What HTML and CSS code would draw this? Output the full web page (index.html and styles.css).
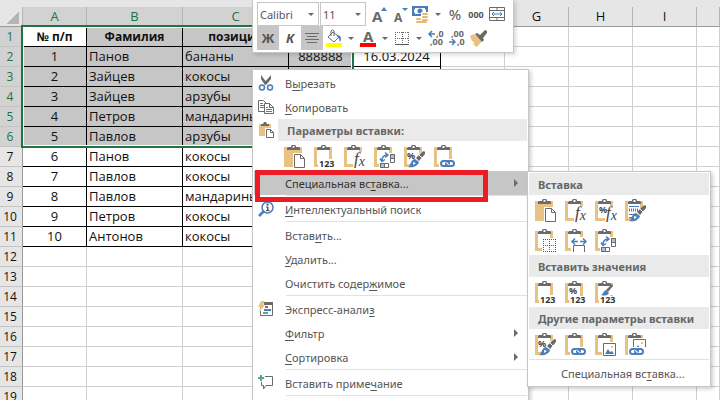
FILE: index.html
```html
<!DOCTYPE html>
<html lang="ru">
<head>
  <meta charset="UTF-8" />
  <meta name="viewport" content="width=device-width, initial-scale=1.0"/>
  <title>Специальная вставка</title>
  <link rel="stylesheet" href="styles.css">
</head>
<body>
  <!-- shared icon shapes -->
  <svg class="sprite" aria-hidden="true">
    <symbol id="clip" viewBox="0 0 24 24">
      <path fill="#6a6a6a" fill-rule="evenodd" d="M4 6V4l1-1h3V2l1-1h3l1 1v1h3l1 1v2zM9.500 2v2h2V2z"/>
    </symbol>
    <symbol id="board" viewBox="0 0 24 24">
      <path fill="#e8c282" d="M1 3h18v20H1z"/>
      <path fill="#fff" d="M4 3h12v17H4z"/>
      <use href="#clip"/>
    </symbol>
    <symbol id="link" viewBox="0 0 24 24">
      <path fill="#fff" d="M6 15h18v9H6z"/>
      <g fill="none" stroke="#4a7ebb" stroke-width="2">
        <rect x="8" y="17" width="8" height="5" rx="2.500"/>
        <rect x="13" y="17" width="8" height="5" rx="2.500"/>
      </g>
      <path stroke="#fff" d="M12.500 18l4 3"/>
    </symbol>
    <symbol id="brush" viewBox="0 0 24 24">
      <path fill="#6a6a6a" d="M21 7l1 1v2l-6 7-3-3 6-6z"/>
      <path fill="none" stroke="#fff" d="M16 11l3 3"/>
      <path fill="#4a7ebb" d="M12 15l4 3c-1 4-6 6-11 5 3-1 2-7 7-8z"/>
      <path fill="#fff" d="M10 18l3 1-3 2z"/>
    </symbol>
    <symbol id="paste" viewBox="0 0 24 24">
      <path fill="#e8c282" d="M1 3h18v20H1z"/>
      <use href="#clip"/>
      <path fill="#fff" d="M10 9h13v15H10z"/>
      <path fill="#fff" stroke="#6a6a6a" d="M11.500 10.500h6l4 4v9h-10zM17.500 10.500v4h4"/>
    </symbol>
    <symbol id="values" viewBox="0 0 24 24">
      <use href="#board"/>
      <path fill="#fff" d="M5 15h19v9H5z"/>
      <text class="t-num" x="6" y="23">123</text>
    </symbol>
    <symbol id="formulas" viewBox="0 0 24 24">
      <use href="#board"/>
      <path fill="#fff" d="M10 8h14v16H10z"/>
      <text class="t-fx" x="11" y="20">f<tspan dy="2" font-size="14">x</tspan></text>
    </symbol>
    <symbol id="formulas-num" viewBox="0 0 24 24">
      <use href="#board"/>
      <path fill="#fff" d="M11 8h13v16H11z"/>
      <text class="t-pct" x="5" y="15">%</text>
      <text class="t-fx" x="12" y="20">f<tspan dy="2" font-size="14">x</tspan></text>
    </symbol>
    <symbol id="transpose" viewBox="0 0 24 24">
      <use href="#board"/>
      <path fill="#fff" d="M6 9h18v15H6z"/>
      <g stroke="#6a6a6a">
        <path fill="#fff" d="M7.500 19.500h8v4h-8zM17.500 10.500h4v8h-4z"/>
        <path fill="#a7c2e0" d="M7.500 19.500h4v4h-4zM17.500 10.500h4v4h-4z"/>
      </g>
      <path fill="none" stroke="#4a7ebb" stroke-width="1.500" d="M9 17c0-4 2-6 5-6M7 14.500l2 3 3-2M12 8.500l3 2.500-3 2.500"/>
    </symbol>
    <symbol id="format" viewBox="0 0 24 24">
      <use href="#board"/>
      <path fill="#fff" d="M14 11l7-5h3v18H9z"/>
      <text class="t-pct" x="4" y="15">%</text>
      <use href="#brush"/>
    </symbol>
    <symbol id="paste-link" viewBox="0 0 24 24">
      <use href="#board"/>
      <use href="#link"/>
    </symbol>
    <symbol id="source" viewBox="0 0 24 24">
      <use href="#board"/>
      <path stroke="#4a7ebb" d="M5 8.500h10M5 16.500h8M5 19.500h4"/>
      <path fill="none" stroke="#d9502e" stroke-dasharray="1 1" stroke-width="3" d="M5 12h9"/>
      <path fill="#fff" d="M16 11l5-4h3v17H12z"/>
      <use href="#brush"/>
    </symbol>
    <symbol id="no-borders" viewBox="0 0 24 24">
      <use href="#board"/>
      <path fill="#fff" d="M8 10h16v14H8z"/>
      <path fill="none" stroke="#555" stroke-dasharray="1 1" d="M9 11.500h13M9 17.500h13M9 23.500h13M9.500 11v13M15.500 11v13M21.500 11v13"/>
    </symbol>
    <symbol id="col-width" viewBox="0 0 24 24">
      <use href="#board"/>
      <path fill="#fff" d="M7 9h17v15H7z"/>
      <path fill="none" stroke="#6a6a6a" d="M9.500 24v-6.500h11V24"/>
      <path fill="none" stroke="#4a7ebb" stroke-width="1.500" d="M8 13.500h6M16 13.500h6M11 10.500l-3 3 3 3M19 10.500l3 3-3 3"/>
    </symbol>
    <symbol id="values-num" viewBox="0 0 24 24">
      <use href="#board"/>
      <path fill="#fff" d="M5 16h19v8H5z"/>
      <text class="t-pct" x="5" y="14">%</text>
      <text class="t-num" x="6" y="23">123</text>
    </symbol>
    <symbol id="values-fmt" viewBox="0 0 24 24">
      <use href="#board"/>
      <path fill="#fff" d="M5 16h19v8H5zM15 7h5v8h-5z"/>
      <path fill="#6a6a6a" d="M18 4l1 2-5 6-2-2z"/>
      <path fill="#4a7ebb" d="M12 10l3 3c-2 3-5 3-8 2 2 0 2-4 5-5z"/>
      <text class="t-num" x="6" y="23">123</text>
    </symbol>
    <symbol id="pic" viewBox="0 0 24 24">
      <path fill="#fff" stroke="#6a6a6a" d="M9.500 11.500h12v12h-12z"/>
      <path fill="#4a7ebb" d="M11 22l3-5 2 3 2-1 2 3z"/>
      <path fill="#e8c282" d="M17 14h2v2h-2z"/>
    </symbol>
    <symbol id="picture" viewBox="0 0 24 24">
      <use href="#board"/>
      <path fill="#fff" d="M8 10h16v14H8z"/>
      <use href="#pic"/>
    </symbol>
    <symbol id="picture-link" viewBox="0 0 24 24">
      <use href="#board"/>
      <path fill="#fff" d="M8 6h16v18H5v-8h3z"/>
      <use href="#pic" y="-4"/>
      <use href="#link" x="-2"/>
    </symbol>
  </svg>

  <main class="sheet">
    <table class="grid">
      <colgroup>
        <col class="w-head"><col class="w-std"><col class="w-b"><col class="w-c"><col class="w-std">
        <col class="w-e"><col class="w-std"><col class="w-std"><col class="w-std"><col class="w-std"><col>
      </colgroup>
      <thead>
        <tr>
          <th class="corner"></th>
          <th class="on">A</th><th class="on">B</th><th class="on">C</th><th class="on">D</th>
          <th>E</th><th>F</th><th>G</th><th>H</th><th>I</th><th></th>
        </tr>
      </thead>
      <tbody id="rows"></tbody>
    </table>
    <div class="selection"></div>
  </main>

  <div class="toolbar">
    <div class="tool-row">
      <span class="combo combo-font">
        <select aria-label="Шрифт"><option>Calibri</option></select>
      </span>
      <span class="combo combo-size">
        <select aria-label="Размер"><option>11</option></select>
      </span>
      <button class="tool" aria-label="Увеличить"><svg viewBox="0 0 20 20"><text class="t-a" x="3" y="18">A</text><path fill="#4a7ebb" d="M12 7l3-4 3 4z"/></svg></button>
      <button class="tool" aria-label="Уменьшить"><svg viewBox="0 0 20 20"><text class="t-a small" x="4" y="18">A</text><path fill="#4a7ebb" d="M12 4h6l-3 3z"/></svg></button>
      <button class="tool" aria-label="Денежный формат"><svg viewBox="0 0 20 20">
        <path fill="#4a7ebb" fill-rule="evenodd" d="M1 2h16v10H1zM4 4v1L3 6v2l1 1v1h10V9l1-1V6l-1-1V4z"/>
        <circle cx="9" cy="7" r="2.500" fill="#4a7ebb"/>
        <path fill="#fff" d="M10 8h9v11H4v-6h6z"/>
        <path stroke="#e8b872" stroke-width="2" stroke-linecap="round" d="M12 10h4M12 13h4M12 16h4M6 15h3M6 18h9"/>
      </svg></button>
      <button class="drop" aria-label="Ещё форматы"></button>
      <button class="tool pct">%</button>
      <button class="tool zeros">000</button>
      <button class="tool" aria-label="Объединить"><svg viewBox="0 0 20 20">
        <path fill="none" stroke="#6a6a6a" d="M2.500 3.500h15v13h-15zM2 6.500h16M2 13.500h16M10 3v3M10 14v3"/>
        <path fill="none" stroke="#4a7ebb" d="M5 10h10M7 8l-2 2 2 2M13 8l2 2-2 2"/>
      </svg></button>
    </div>
    <div class="tool-row">
      <button class="tool letter on">Ж</button>
      <button class="tool letter"><i>К</i></button>
      <button class="tool on" aria-label="По центру"><svg viewBox="0 0 20 20"><path stroke="#6a6a6a" d="M3 5.500h14M5 8.500h10M3 11.500h14M5 14.500h10"/></svg></button>
      <button class="tool" aria-label="Заливка"><svg viewBox="0 0 20 20">
        <path fill="#fff" stroke="#6a6a6a" d="M4 9l5-5 6 5-5 5z"/>
        <path fill="none" stroke="#6a6a6a" d="M7 8V3q1.500-2 3 0v5"/>
        <path fill="#4a7ebb" d="M14 7c3 1 4 4 2 7-1-2 0-4-3-5z"/>
        <path fill="#ff0" d="M2 15h16v4H2z"/>
      </svg></button>
      <button class="drop" aria-label="Цвет заливки"></button>
      <button class="tool" aria-label="Цвет текста"><svg viewBox="0 0 20 20"><text class="t-a" x="5" y="14">A</text><path fill="#f00" d="M2 15h16v4H2z"/></svg></button>
      <button class="drop" aria-label="Выбор цвета текста"></button>
      <button class="tool" aria-label="Границы"><svg viewBox="0 0 20 20">
        <path fill="none" stroke="#6a6a6a" stroke-dasharray="1 1" d="M3 4.500h14M3 10.500h14M3.500 4v12M10.500 4v12M16.500 4v12"/>
        <path stroke="#555" d="M3 16.500h14"/>
      </svg></button>
      <button class="drop" aria-label="Выбор границ"></button>
      <button class="tool" aria-label="Увеличить разрядность"><svg viewBox="0 0 20 20">
        <path fill="none" stroke="#4a7ebb" stroke-width="1.500" d="M3 6h6M6 3L3 6l3 3"/>
        <text class="t-dec" x="10" y="9">,0</text><text class="t-dec" x="4" y="17">,00</text>
      </svg></button>
      <button class="tool" aria-label="Уменьшить разрядность"><svg viewBox="0 0 20 20">
        <text class="t-dec" x="4" y="9">,00</text><text class="t-dec" x="10" y="17">,0</text>
        <path fill="none" stroke="#4a7ebb" stroke-width="1.500" d="M2 14h6M5 11l3 3-3 3"/>
      </svg></button>
      <button class="tool" aria-label="Формат по образцу"><svg viewBox="0 0 20 20">
        <path fill="#e8c282" d="M2 8l4-2 8 7-5 6c-2-1-3-2-4-4l2 0-3-2z"/>
        <path fill="#6a6a6a" d="M7 6l2-1 3 2 5-5 2 1v2l-4 5 1 2-2 2z"/>
      </svg></button>
    </div>
  </div>

  <nav class="menu context-menu">
    <button class="item"><svg viewBox="0 0 16 16">
      <path fill="#6a6a6a" d="M3 0l6 8-2 2L3 4zM13 0v4L8 10 6 8z"/>
      <g fill="none" stroke="#4a7ebb" stroke-width="1.500"><circle cx="4" cy="12.500" r="2.500"/><circle cx="12" cy="12.500" r="2.500"/></g>
    </svg><span>В<u>ы</u>резать</span></button>
    <button class="item"><svg viewBox="0 0 16 16">
      <path fill="#fff" stroke="#6a6a6a" d="M.5 1.500h5l3 3v8h-8z"/>
      <path stroke="#4a7ebb" d="M2 4.500h3M2 6.500h4M2 8.500h4"/>
      <path fill="#fff" stroke="#6a6a6a" d="M6.500 4.500h5l4 4v6h-9zM11.500 4.500v4h4"/>
      <path stroke="#4a7ebb" d="M8 8.500h2M8 10.500h6M8 12.500h6"/>
    </svg><span><u>К</u>опировать</span></button>
    <div class="caption"><svg viewBox="0 0 16 16">
      <path fill="#e8c282" d="M1 2h12v12H1z"/>
      <path fill="#6a6a6a" d="M3 4V2h2l1-2h2l1 2h2v2z"/>
      <path fill="#fff" d="M7 6h9v10H7z"/>
      <path fill="#fff" stroke="#6a6a6a" d="M8.500 7.500h4l3 3v5h-7zM12.500 7.500v3h3"/>
    </svg><strong>Параметры вставки:</strong></div>
    <div class="icons">
      <button aria-label="Вставить"><svg><use href="#paste"/></svg></button>
      <button aria-label="Значения"><svg><use href="#values"/></svg></button>
      <button aria-label="Формулы"><svg><use href="#formulas"/></svg></button>
      <button aria-label="Транспонировать"><svg><use href="#transpose"/></svg></button>
      <button aria-label="Форматирование"><svg><use href="#format"/></svg></button>
      <button aria-label="Вставить связь"><svg><use href="#paste-link"/></svg></button>
    </div>
    <button class="item more active"><span>Специальная вс<u>т</u>авка...</span></button>
    <hr>
    <button class="item"><svg viewBox="0 0 16 16">
      <circle cx="9.500" cy="6.500" r="5.500" fill="#fff" stroke="#4a7ebb" stroke-width="1.500"/>
      <path stroke="#4a7ebb" stroke-width="2.500" d="M5.500 10.500L1 15"/>
      <path fill="#555" d="M8.500 2.500h2v2h-2zM8 5.500h2.500V9h1v1H8V9h1V6.500H8z"/>
    </svg><span><u>И</u>нтеллектуальный поиск</span></button>
    <hr>
    <button class="item"><span>Встав<u>и</u>ть...</span></button>
    <button class="item"><span><u>У</u>далить...</span></button>
    <button class="item"><span>Очистить содер<u>ж</u>имое</span></button>
    <hr>
    <button class="item"><svg viewBox="0 0 16 16">
      <path fill="#fff" stroke="#6a6a6a" d="M2.500 1.500h12v13h-12z"/>
      <path fill="#6a6a6a" d="M6 1h9v3H6z"/>
      <path fill="#fff" d="M0 0h6v10H0z"/>
      <path fill="#e8c282" d="M3 0h4L5 4h2l-6 7 1-5H0z"/>
      <path stroke="#d9502e" stroke-width="2" d="M7 6h3"/>
      <path stroke="#4a7ebb" stroke-width="2" d="M6 9h7"/>
      <path stroke="#5fa38c" stroke-width="2" d="M5 12h5"/>
    </svg><span>Экспресс-анали<u>з</u></span></button>
    <button class="item more"><span><u>Ф</u>ильтр</span></button>
    <button class="item more"><span><u>С</u>ортировка</span></button>
    <hr>
    <button class="item"><svg viewBox="0 0 16 16">
      <path fill="none" stroke="#6a6a6a" d="M7 1.500h7.500v9H8L5.500 14v-3.500h-2V7"/>
      <path stroke="#5fa38c" stroke-width="2" d="M0 3h6M3 0v6"/>
    </svg><span>Вставить приме<u>ч</u>ание</span></button>
    <hr>
  </nav>

  <div class="mark"></div>

  <nav class="menu submenu">
    <div class="caption"><strong>Вставка</strong></div>
    <div class="icons">
      <button aria-label="Вставить"><svg><use href="#paste"/></svg></button>
      <button aria-label="Формулы"><svg><use href="#formulas"/></svg></button>
      <button aria-label="Формулы и форматы чисел"><svg><use href="#formulas-num"/></svg></button>
      <button aria-label="Сохранить исходное форматирование"><svg><use href="#source"/></svg></button>
      <button aria-label="Без рамок"><svg><use href="#no-borders"/></svg></button>
      <button aria-label="Сохранить ширины столбцов"><svg><use href="#col-width"/></svg></button>
      <button aria-label="Транспонировать"><svg><use href="#transpose"/></svg></button>
    </div>
    <div class="caption"><strong>Вставить значения</strong></div>
    <div class="icons">
      <button aria-label="Значения"><svg><use href="#values"/></svg></button>
      <button aria-label="Значения и форматы чисел"><svg><use href="#values-num"/></svg></button>
      <button aria-label="Значения и исходное форматирование"><svg><use href="#values-fmt"/></svg></button>
    </div>
    <div class="caption"><strong>Другие параметры вставки</strong></div>
    <div class="icons">
      <button aria-label="Форматирование"><svg><use href="#format"/></svg></button>
      <button aria-label="Вставить связь"><svg><use href="#paste-link"/></svg></button>
      <button aria-label="Рисунок"><svg><use href="#picture"/></svg></button>
      <button aria-label="Связанный рисунок"><svg><use href="#picture-link"/></svg></button>
    </div>
    <hr>
    <button class="item"><span>Специальная вс<u>т</u>авка...</span></button>
  </nav>

  <script>
    const data = [
      ["№ п/п", "Фамилия", "позиция", "", ""],
      ["1", "Панов", "бананы", "888888", "16.03.2024"],
      ["2", "Зайцев", "кокосы", "", ""],
      ["3", "Зайцев", "арзубы", "", ""],
      ["4", "Петров", "мандарины", "", ""],
      ["5", "Павлов", "арзубы", "", ""],
      ["6", "Панов", "кокосы", "", ""],
      ["7", "Павлов", "кокосы", "", ""],
      ["8", "Павлов", "мандарины", "", ""],
      ["9", "Петров", "кокосы", "", ""],
      ["10", "Антонов", "кокосы", "", ""],
    ];
    const rowCount = 19;
    const colCount = 10;
    const selectedRows = 6;
    const selectedCols = 4;

    const body = document.getElementById("rows");

    for (let r = 0; r < rowCount; r++) {
      const tr = document.createElement("tr");
      const head = document.createElement("th");
      head.textContent = r + 1;
      if (r < selectedRows) head.classList.add("on");
      tr.appendChild(head);

      for (let c = 0; c < colCount; c++) {
        const td = document.createElement("td");
        if (data[r] && c < data[r].length) {
          td.textContent = data[r][c];
          td.classList.add("filled");
          if (r === 0) td.classList.add("title");
          if (c === 0 || c > 2) td.classList.add("center");
        }
        if (r < selectedRows && c < selectedCols && r + c > 0) td.classList.add("selected");
        tr.appendChild(td);
      }
      body.appendChild(tr);
    }
  </script>
</body>
</html>
```
FILE: styles.css
```css
* {
  box-sizing: border-box;
}

body {
  margin: 0;
  height: 100vh;
  overflow: hidden;
  position: relative;
  background: #fff;
  font-family: "Noto Sans", "Open Sans", sans-serif;
  font-size: 11px;
  color: #555;
}

button,
select {
  font: inherit;
  color: inherit;
  border: 0;
  margin: 0;
  padding: 0;
  background: none;
}

.sprite {
  display: none;
}

/* sheet */
.sheet {
  position: relative;
  height: 100%;
  padding-top: 7px;
  overflow: hidden;
  background: #e6e6e6;
}

.grid {
  width: 100%;
  table-layout: fixed;
  border-collapse: separate;
  border-spacing: 0;
  background: #fff;
  font-family: "Open Sans", sans-serif;
  font-size: 13px;
  line-height: 19px;
  color: #111;
}

.w-head {
  width: 23px;
}

.w-std {
  width: 64px;
}

.w-b {
  width: 96px;
}

.w-c {
  width: 106px;
}

.w-e {
  width: 88px;
}

.grid th,
.grid td {
  height: 20px;
  padding: 0 2px;
  border-right: 1px solid #d0d0d0;
  border-bottom: 1px solid #d0d0d0;
  white-space: nowrap;
  overflow: hidden;
}

.grid th {
  padding: 0;
  background: #e6e6e6;
  font-weight: normal;
}

.grid thead th {
  border-right-color: #b4b4b4;
  border-bottom-color: #999;
}

.grid tbody th {
  border-right-color: #999;
  border-bottom-color: #c4c4c4;
  padding-right: 2px;
  font-size: 12px;
}

.grid th.on {
  background: #d2d2d2;
  color: #217346;
}

.grid .corner {
  background: linear-gradient(135deg, transparent 50%, #b4b4b4 50%) 7px 5px / 12px 12px no-repeat #e6e6e6;
}

.grid td.filled {
  border-color: #000;
}

.grid td.title {
  font-size: 12px;
  font-weight: bold;
  text-align: center;
}

.grid td.center {
  text-align: center;
}

.grid td.selected {
  background: #c6c6c6;
}

.selection {
  position: absolute;
  left: 21px;
  top: 25px;
  width: 333px;
  height: 123px;
  border: 2px solid #217346;
  box-shadow: inset 0 0 0 1px #fff;
}

/* floating toolbar */
.toolbar {
  position: absolute;
  left: 252px;
  top: 0;
  padding: 2px 4px 2px;
  width: 262px;
  border: 1px solid #c6c6c6;
  border-top: 0;
  background: #fff;
  box-shadow: 2px 2px 4px rgba(0, 0, 0, 0.15);
}

.tool-row {
  display: flex;
  align-items: center;
  gap: 1px;
  height: 24px;
}

.tool-row svg {
  display: block;
  width: 20px;
  height: 20px;
}

.combo {
  position: relative;
  height: 24px;
  border: 1px solid #c6c6c6;
}

.combo select {
  appearance: none;
  width: 100%;
  height: 100%;
  padding-left: 2px;
}

.combo::after,
.drop::after {
  content: "";
  border: 3px solid transparent;
  border-top-color: #6a6a6a;
  border-bottom: 0;
}

.combo::after {
  position: absolute;
  right: 4px;
  top: 10px;
}

.combo-font {
  width: 62px;
}

.combo-size {
  width: 46px;
  margin-right: 2px;
}

.tool {
  flex: none;
  display: flex;
  align-items: center;
  justify-content: center;
  width: 20px;
  height: 24px;
}

.tool.on {
  width: 22px;
  background: #c6c6c6;
}

.drop {
  display: flex;
  align-items: center;
  justify-content: center;
  width: 12px;
  height: 24px;
}

.pct {
  font-size: 15px;
}

.zeros {
  font-size: 9px;
  font-weight: bold;
}

.letter {
  font-size: 13px;
  font-weight: bold;
}

/* menus */
.menu {
  position: absolute;
  padding: 1px;
  border: 1px solid #c6c6c6;
  background: #fff;
  box-shadow: 2px 2px 4px rgba(0, 0, 0, 0.2);
}

.context-menu {
  left: 252px;
  top: 69px;
  width: 277px;
  bottom: -4px;
}

.submenu {
  left: 527px;
  top: 171px;
  width: 184px;
}

.item {
  position: relative;
  display: flex;
  align-items: center;
  width: 100%;
  height: 24px;
  padding-left: 31px;
  text-align: left;
  white-space: nowrap;
}

.item svg,
.context-menu .caption svg {
  flex: none;
  width: 16px;
  height: 16px;
  margin-left: -27px;
  margin-right: 11px;
}

.item u {
  text-underline-offset: 2px;
}

.item.more::after {
  content: "";
  margin-left: auto;
  margin-right: 9px;
  border: 4px solid transparent;
  border-left-color: #6a6a6a;
  border-right: 0;
}

.item.active {
  background: #c6c6c6;
  color: #333;
}

.menu hr {
  height: 1px;
  margin: 0 0 1px 32px;
  border: 0;
  background: #e1e1e1;
}

.caption {
  display: flex;
  align-items: center;
  height: 22px;
  padding-left: 9px;
  background: #eaeaea;
  color: #666;
}

.context-menu .caption {
  padding-left: 31px;
  background: linear-gradient(to right, #fff 24px, #eaeaea 24px);
}

.context-menu .caption svg {
  margin-right: 13px;
}

.icons {
  display: flex;
  flex-wrap: wrap;
  padding-left: 2px;
}

.submenu .icons {
  padding-right: 58px;
}

.submenu .icons:last-of-type {
  padding-right: 0;
}

.context-menu .icons {
  padding-left: 26px;
}

.icons button {
  width: 30px;
  height: 30px;
  padding: 3px;
}

.icons svg {
  display: block;
  width: 24px;
  height: 24px;
}

.submenu hr {
  margin-left: 0;
}

.submenu .item {
  padding-left: 32px;
}

/* highlighted command */
.mark {
  position: absolute;
  left: 255px;
  top: 170px;
  width: 233px;
  height: 32px;
  border: 5px solid #ed1c24;
}

/* lettering inside icons */
.t-num {
  font: bold 9px "Noto Sans", sans-serif;
  fill: #333;
}

.t-fx {
  font: italic 17px "Liberation Serif", serif;
  fill: #444;
}

.t-pct {
  font: bold 9px "Noto Sans", sans-serif;
  fill: #444;
}

.t-a {
  font: bold 15px "Noto Sans", sans-serif;
  fill: #6a6a6a;
}

.t-a.small {
  font-size: 12px;
}

.t-dec {
  font: bold 9px "Noto Sans", sans-serif;
  fill: #6a6a6a;
}
```
